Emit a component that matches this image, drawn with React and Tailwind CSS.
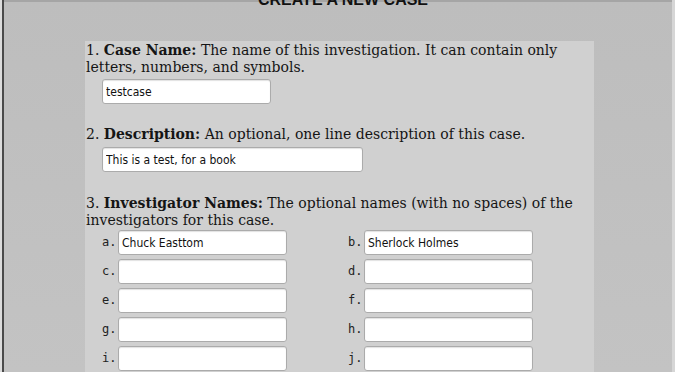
const names = [
  ["a", "Chuck Easttom"],
  ["b", "Sherlock Holmes"],
  ["c", ""],
  ["d", ""],
  ["e", ""],
  ["f", ""],
  ["g", ""],
  ["h", ""],
  ["i", ""],
  ["j", ""],
];

const inputCls =
  "h-[25px] bg-white border border-[#ababab] rounded-[3px] shadow-[inset_0_1px_1px_rgba(0,0,0,0.12)] px-[3px] text-[12px] text-[#111] font-['DejaVu_Sans_Condensed','DejaVu_Sans',sans-serif] outline-none";

const App = () => {
  return (
    <div className="w-[675px] h-[372px] overflow-hidden bg-[#bfbfbf] flex">
      <div className="w-[2px] bg-[#dcdcdc]" />
      <div className="w-[2px] bg-[#4a4a4a]" />
      <div className="flex-1 flex flex-col border-t-[2px] border-[#a5a5a5] bg-gradient-to-b from-[#bdbdbd] to-[#c3c3c3]">
        <h2 className="h-[4px] -mt-[2px] overflow-visible text-center leading-none">
          <span className="block -translate-y-[8px] pl-[10px] text-[16px] font-bold text-[#111] font-['Liberation_Sans',Arial,sans-serif]">
            CREATE A NEW CASE
          </span>
        </h2>

        <div className="ml-[81px] mt-[37px] w-[509px] flex-1 bg-[#d0d0d0] pl-[1px] pt-[1px] text-[14px] leading-[17px] text-[#151515] font-['DejaVu_Serif',serif]">
          <p>
            1. <b>Case Name:</b> The name of this investigation. It can contain only letters, numbers, and
            symbols.
          </p>
          <div className="ml-[16px] mt-[3px]">
            <input className={`${inputCls} w-[169px]`} defaultValue="testcase" />
          </div>

          <p className="mt-[22px]">
            2. <b>Description:</b> An optional, one line description of this case.
          </p>
          <div className="ml-[16px] mt-[4px]">
            <input className={`${inputCls} w-[261px]`} defaultValue="This is a test, for a book" />
          </div>

          <p className="mt-[23px]">
            3. <b>Investigator Names:</b> The optional names (with no spaces) of the investigators for
            this case.
          </p>
          <div className="ml-[16px] mt-[1px] grid grid-cols-[246px_200px] gap-y-[4px]">
            {names.map(([letter, value]) => (
              <div key={letter} className="flex items-center">
                <span className="w-[16px] text-[12px] text-[#222] font-['DejaVu_Sans_Mono',monospace]">
                  {letter}.
                </span>
                <input className={`${inputCls} w-[169px]`} defaultValue={value} />
              </div>
            ))}
          </div>
        </div>
      </div>
      <div className="w-[3px] bg-[#d6d6d6]" />
    </div>
  );
};

export default App;
